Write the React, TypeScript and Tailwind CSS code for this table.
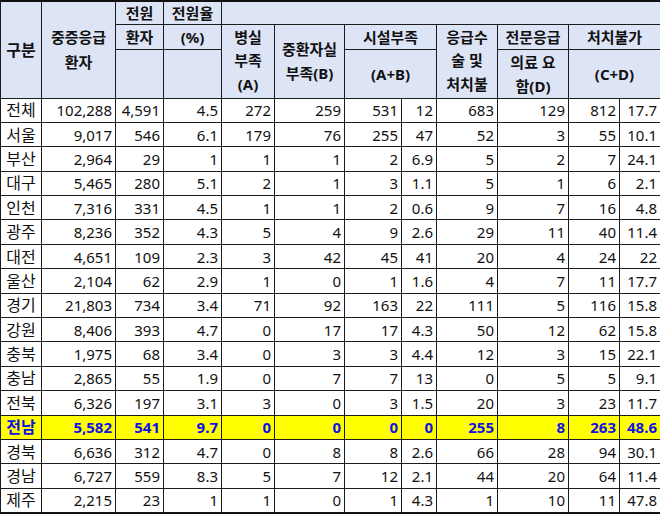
const rows: (string | number)[][] = [
  ["전체", "102,288", "4,591", "4.5", "272", "259", "531", "12", "683", "129", "812", "17.7"],
  ["서울", "9,017", "546", "6.1", "179", "76", "255", "47", "52", "3", "55", "10.1"],
  ["부산", "2,964", "29", "1", "1", "1", "2", "6.9", "5", "2", "7", "24.1"],
  ["대구", "5,465", "280", "5.1", "2", "1", "3", "1.1", "5", "1", "6", "2.1"],
  ["인천", "7,316", "331", "4.5", "1", "1", "2", "0.6", "9", "7", "16", "4.8"],
  ["광주", "8,236", "352", "4.3", "5", "4", "9", "2.6", "29", "11", "40", "11.4"],
  ["대전", "4,651", "109", "2.3", "3", "42", "45", "41", "20", "4", "24", "22"],
  ["울산", "2,104", "62", "2.9", "1", "0", "1", "1.6", "4", "7", "11", "17.7"],
  ["경기", "21,803", "734", "3.4", "71", "92", "163", "22", "111", "5", "116", "15.8"],
  ["강원", "8,406", "393", "4.7", "0", "17", "17", "4.3", "50", "12", "62", "15.8"],
  ["충북", "1,975", "68", "3.4", "0", "3", "3", "4.4", "12", "3", "15", "22.1"],
  ["충남", "2,865", "55", "1.9", "0", "7", "7", "13", "0", "5", "5", "9.1"],
  ["전북", "6,326", "197", "3.1", "3", "0", "3", "1.5", "20", "3", "23", "11.7"],
  ["전남", "5,582", "541", "9.7", "0", "0", "0", "0", "255", "8", "263", "48.6"],
  ["경북", "6,636", "312", "4.7", "0", "8", "8", "2.6", "66", "28", "94", "30.1"],
  ["경남", "6,727", "559", "8.3", "5", "7", "12", "2.1", "44", "20", "64", "11.4"],
  ["제주", "2,215", "23", "1", "1", "0", "1", "4.3", "1", "10", "11", "47.8"],
];

const widths = [41, 74, 48, 58, 53, 70, 57, 35, 61, 71, 51, 41];

const th = "border border-[#1c1c1c] bg-[#dce4f5] p-0 text-center align-middle font-bold leading-[18px]";

export default function App() {
  return (
    <div className="w-[660px] h-[514px] overflow-hidden bg-white">
      <table
        className="table-fixed border-collapse w-[660px] border-t-2 border-b-2 border-[#111] text-[15px] text-[#111]"
        style={{ fontFamily: '"Noto Sans", "Noto Sans CJK KR", sans-serif' }}
      >
        <colgroup>
          {widths.map((w, i) => (
            <col key={i} style={{ width: w }} />
          ))}
        </colgroup>
        <thead>
          <tr className="h-[23px]">
            <th rowSpan={3} className={`${th} text-[16px]`}>구분</th>
            <th rowSpan={3} className={`${th} leading-[25px]`}>
              중증응급
              <br />
              환자
            </th>
            <th className={th}>전원</th>
            <th className={th}>전원율</th>
            <th colSpan={8} className={th}></th>
          </tr>
          <tr className="h-[25px]">
            <th className={th}>환자</th>
            <th className={th}>(%)</th>
            <th rowSpan={2} className={`${th} leading-[23.5px]`}>
              병실
              <br />
              부족
              <br />
              (A)
            </th>
            <th rowSpan={2} className={`${th} leading-[24px]`}>
              중환자실
              <br />
              부족(B)
            </th>
            <th colSpan={2} className={th}>시설부족</th>
            <th rowSpan={2} className={`${th} leading-[23.5px]`}>
              응급수
              <br />
              술 및
              <br />
              처치불
            </th>
            <th className={th}>전문응급</th>
            <th colSpan={2} className={th}>처치불가</th>
          </tr>
          <tr className="h-[48px]">
            <th className={th}></th>
            <th className={th}></th>
            <th colSpan={2} className={th}>(A+B)</th>
            <th className={`${th} leading-[24px]`}>
              의료 요
              <br />
              함(D)
            </th>
            <th colSpan={2} className={th}>(C+D)</th>
          </tr>
        </thead>
        <tbody>
          {rows.map((r) => {
            const hl = r[0] === "전남";
            return (
              <tr
                key={r[0] as string}
                className={`h-[24.4px] ${hl ? "bg-[#ffff00] font-bold text-[#1010e8]" : ""}`}
              >
                {r.map((c, i) => (
                  <td
                    key={i}
                    className={`border border-[#1c1c1c] p-0 align-middle leading-[18px] ${
                      i === 0 ? "text-center text-[16px]" : "text-right pr-[3px]"
                    }`}
                  >
                    {c}
                  </td>
                ))}
              </tr>
            );
          })}
        </tbody>
      </table>
    </div>
  );
}
